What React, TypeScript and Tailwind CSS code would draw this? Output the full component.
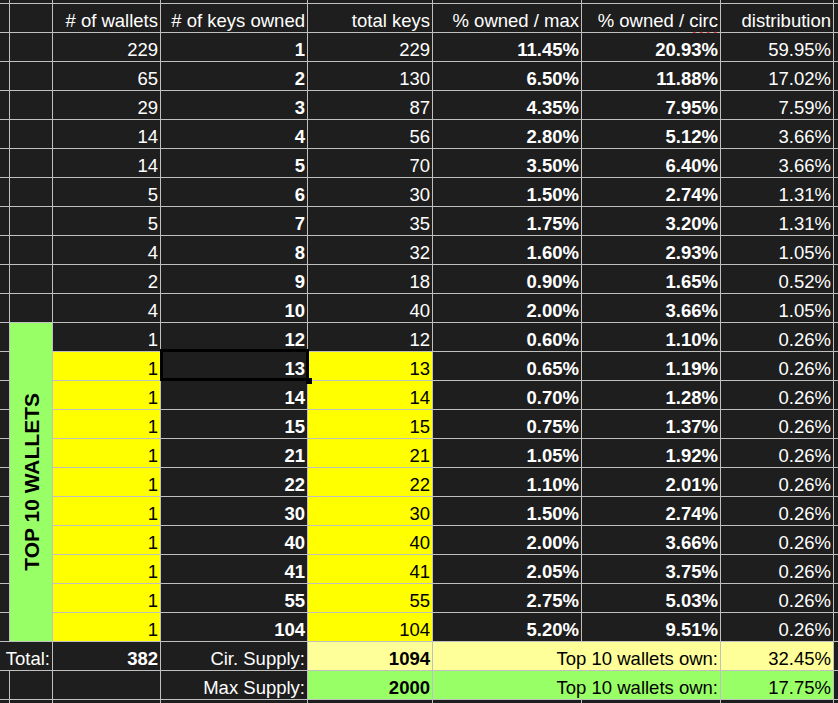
import React from 'react';
import { twMerge } from 'tailwind-merge';

type Row = [number, number, number, string, string, string];

const ROWS: Row[] = [
  [229, 1, 229, '11.45%', '20.93%', '59.95%'],
  [65, 2, 130, '6.50%', '11.88%', '17.02%'],
  [29, 3, 87, '4.35%', '7.95%', '7.59%'],
  [14, 4, 56, '2.80%', '5.12%', '3.66%'],
  [14, 5, 70, '3.50%', '6.40%', '3.66%'],
  [5, 6, 30, '1.50%', '2.74%', '1.31%'],
  [5, 7, 35, '1.75%', '3.20%', '1.31%'],
  [4, 8, 32, '1.60%', '2.93%', '1.05%'],
  [2, 9, 18, '0.90%', '1.65%', '0.52%'],
  [4, 10, 40, '2.00%', '3.66%', '1.05%'],
  [1, 12, 12, '0.60%', '1.10%', '0.26%'],
  [1, 13, 13, '0.65%', '1.19%', '0.26%'],
  [1, 14, 14, '0.70%', '1.28%', '0.26%'],
  [1, 15, 15, '0.75%', '1.37%', '0.26%'],
  [1, 21, 21, '1.05%', '1.92%', '0.26%'],
  [1, 22, 22, '1.10%', '2.01%', '0.26%'],
  [1, 30, 30, '1.50%', '2.74%', '0.26%'],
  [1, 40, 40, '2.00%', '3.66%', '0.26%'],
  [1, 41, 41, '2.05%', '3.75%', '0.26%'],
  [1, 55, 55, '2.75%', '5.03%', '0.26%'],
  [1, 104, 104, '5.20%', '9.51%', '0.26%'],
];

const TOP_START = 10; // first row of the green "TOP 10 WALLETS" block
const SELECTED = 11;

const Cell: React.FC<{ className?: string; children?: React.ReactNode }> = ({ className, children }) => (
  <div
    className={twMerge(
      'flex items-end justify-end overflow-visible whitespace-nowrap bg-[#1e1e1e] pb-[2px] pr-[2px] leading-none text-white',
      className,
    )}
  >
    {children}
  </div>
);

const Blank: React.FC = () => <div className="bg-[#1e1e1e]" />;

const App: React.FC = () => {
  return (
    <div className="h-[703px] w-[838px] overflow-hidden bg-[#1e1e1e] font-['Liberation_Sans',Arial,sans-serif] text-[18.5px]">
      <div className="grid w-max grid-cols-[9px_42px_107px_146px_124px_148px_138px_112px_20px] grid-rows-[3px_repeat(24,28px)_20px] gap-px bg-[#c0c0c0]">
        {/* partial row above the header */}
        {Array.from({ length: 9 }).map((_, i) => (
          <Blank key={`t${i}`} />
        ))}

        {/* header */}
        <Blank />
        <Blank />
        <Cell>
          # of wallets
        </Cell>
        <Cell># of keys owned</Cell>
        <Cell>total keys</Cell>
        <Cell>% owned / max</Cell>
        <Cell>
          <span>
            % owned /{' '}
            <span className="underline decoration-[#e02020] decoration-wavy decoration-1 underline-offset-[4px]">circ</span>
          </span>
        </Cell>
        <Cell>distribution</Cell>
        <Blank />

        {ROWS.map((r, i) => {
          const yellow = i > TOP_START;
          return (
            <React.Fragment key={r[1]}>
              <Blank />
              {i < TOP_START && <Blank />}
              {i === TOP_START && (
                <div className="row-span-11 flex items-center justify-center bg-[#99ff66]">
                  <span className="rotate-180 whitespace-nowrap text-[21px] font-bold leading-none text-black [writing-mode:vertical-rl]">
                    TOP 10 WALLETS
                  </span>
                </div>
              )}
              <Cell className={yellow ? 'bg-[#ffff00] text-black' : ''}>{r[0]}</Cell>
              <Cell className={twMerge('font-bold', i === SELECTED && 'relative')}>
                {r[1]}
                {i === SELECTED && (
                  <>
                    <span className="pointer-events-none absolute -bottom-[1px] -left-[1px] -right-[2px] -top-[3px] z-10 border-[3px] border-black" />
                    <span className="absolute -bottom-[4px] -right-[5px] z-10 h-[6px] w-[6px] bg-black" />
                  </>
                )}
              </Cell>
              <Cell className={yellow ? 'bg-[#ffff00] text-black' : ''}>{r[2]}</Cell>
              <Cell className="font-bold">{r[3]}</Cell>
              <Cell className="font-bold">{r[4]}</Cell>
              <Cell>{r[5]}</Cell>
              <Blank />
            </React.Fragment>
          );
        })}

        {/* totals */}
        <Cell className="col-span-2">Total:</Cell>
        <Cell className="font-bold">382</Cell>
        <Cell>Cir. Supply:</Cell>
        <Cell className="bg-[#ffff99] font-bold text-black">1094</Cell>
        <Cell className="col-span-2 bg-[#ffff99] text-black">Top 10 wallets own:</Cell>
        <Cell className="bg-[#ffff99] text-black">32.45%</Cell>
        <Blank />

        <Blank />
        <Blank />
        <Blank />
        <Cell>Max Supply:</Cell>
        <Cell className="bg-[#99ff66] font-bold text-black">2000</Cell>
        <Cell className="col-span-2 bg-[#99ff66] text-black">Top 10 wallets own:</Cell>
        <Cell className="bg-[#99ff66] text-black">17.75%</Cell>
        <Blank />

        {/* partial row below */}
        {Array.from({ length: 9 }).map((_, i) => (
          <Blank key={`b${i}`} />
        ))}
      </div>
    </div>
  );
};

export default App;
